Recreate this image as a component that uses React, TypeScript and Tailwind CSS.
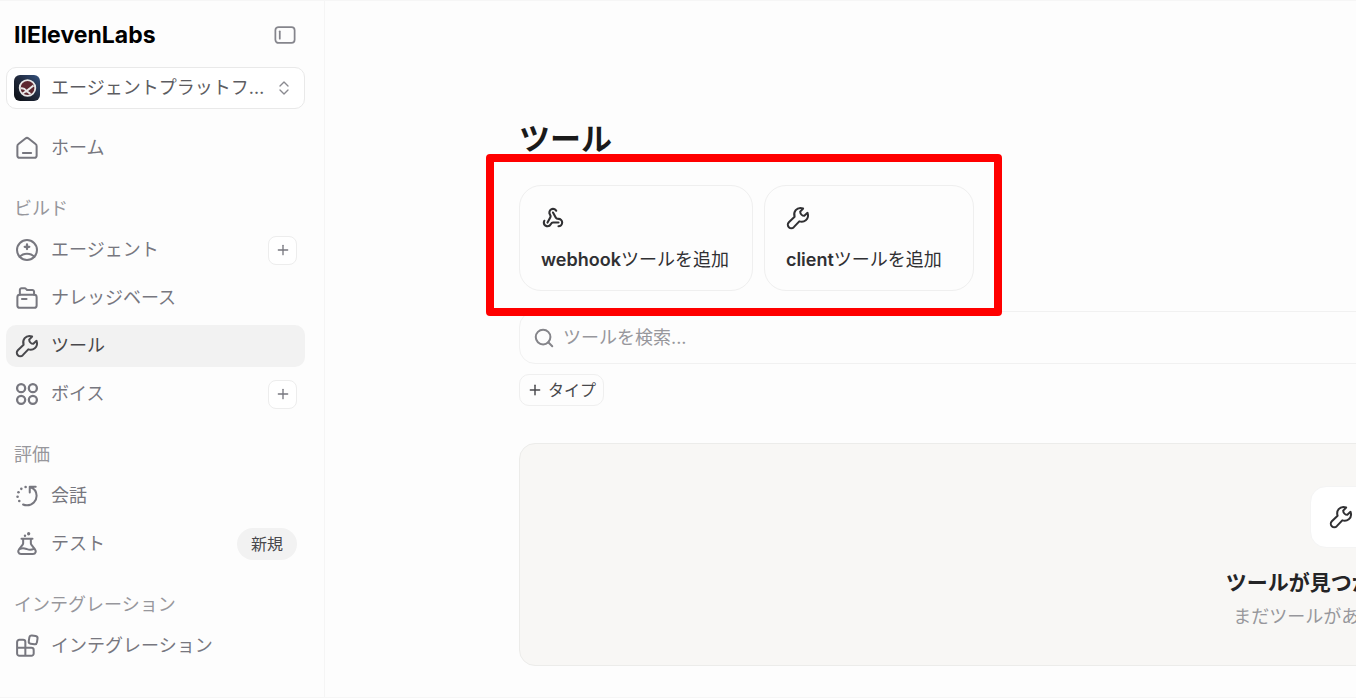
import React from 'react';
import { ChevronDown, ChevronUp, Plus, Search, Webhook } from 'lucide-react';

type IconProps = { className?: string };

const iconProps = {
  viewBox: '0 0 24 24',
  fill: 'none',
  stroke: 'currentColor',
  strokeWidth: 2.2,
  strokeLinecap: 'round' as const,
  strokeLinejoin: 'round' as const,
  'aria-hidden': true
};

const WrenchIcon: React.FC<IconProps> = ({ className }) => (
  <svg {...iconProps} className={className}>
    <path d="M17.6 1.6C14.7.6 11.4 1.2 9.5 3.5 7.8 5.5 7.5 8.2 8.3 10.6L2 16.600A3.8 3.8 0 0 0 7.4 22l6-6.300c2.400.8 5.100.5 7.100-1.200 2.300-1.900 2.900-5.200 1.900-8.100l-3.500 3.200c-2.400-.1-4.400-2.100-4.500-4.500Z" />
  </svg>
);

const WebhookIcon: React.FC<IconProps> = ({ className }) => (
  <Webhook className={className} strokeWidth={2.3} />
);

const HomeIcon: React.FC<IconProps> = ({ className }) => (
  <svg {...iconProps} className={className}>
    <path d="M1.5 10c0-1 .4-1.8 1.2-2.4l7.6-6a2.7 2.7 0 0 1 3.4 0l7.6 6c.8.6 1.2 1.4 1.2 2.4v10.5a2.2 2.2 0 0 1-2.2 2.2H3.7a2.2 2.2 0 0 1-2.2-2.2Z" />
    <path d="M7.5 17.5h9" />
  </svg>
);

const AgentIcon: React.FC<IconProps> = ({ className }) => (
  <svg {...iconProps} className={className}>
    <circle cx="12" cy="12" r="10.9" />
    <path d="M12 6v5M9.5 8.5h5" strokeWidth="2.5" />
    <path d="M4 19.5c1.8-2.2 4.6-3.5 8-3.5s6.2 1.3 8 3.5" />
  </svg>
);

const KnowledgeIcon: React.FC<IconProps> = ({ className }) => (
  <svg {...iconProps} className={className}>
    <rect x="1.5" y="8.5" width="21" height="14.2" rx="2.6" />
    <path d="M4.2 8.5V3.2A1.9 1.9 0 0 1 6.1 1.3h3.3c.6 0 1.1.2 1.5.7l1.2 1.3h5.7a1.9 1.9 0 0 1 1.9 1.9v3.3" />
    <path d="M6.5 13.2h5" />
  </svg>
);

const VoiceIcon: React.FC<IconProps> = ({ className }) => (
  <svg {...iconProps} strokeWidth={2.5} className={className}>
    <circle cx="5.6" cy="5.6" r="4.4" />
    <circle cx="18.4" cy="5.6" r="4.4" />
    <circle cx="5.6" cy="18.4" r="4.4" />
    <circle cx="18.4" cy="18.4" r="4.4" />
  </svg>
);

const ConversationIcon: React.FC<IconProps> = ({ className }) => (
  <svg {...iconProps} className={className}>
    <path d="M21.5 1.8H15v6.5M15.3 2.1c4.3 1.5 7.2 5.3 7.2 9.7 0 5.7-4.6 10.4-10.5 10.4-1.6 0-3-.3-4.3-.9" />
    <g fill="currentColor" stroke="none">
      <circle cx="10.5" cy="2.2" r="1.4" />
      <circle cx="5.8" cy="4.2" r="1.4" />
      <circle cx="2.7" cy="8" r="1.4" />
      <circle cx="1.7" cy="12.8" r="1.4" />
      <circle cx="3.6" cy="17.5" r="1.4" />
    </g>
  </svg>
);

const TestIcon: React.FC<IconProps> = ({ className }) => (
  <svg {...iconProps} className={className}>
    <path d="M6 6.3h12M7.8 6.3v4.9c0 .5-.2 1-.5 1.4l-4 5.2c-1.7 2.3-.7 5.2 2.2 5.2h13c2.9 0 3.9-2.9 2.2-5.2l-4-5.2c-.3-.4-.5-.9-.5-1.4V6.3" />
    <path d="M4.5 17.3c3-1.5 5-.6 7.5.3s4.8 1 7.5-.3" />
    <circle cx="9.8" cy="3" r="1.3" fill="currentColor" stroke="none" />
    <circle cx="13.8" cy=".8" r="1.8" fill="currentColor" stroke="none" />
  </svg>
);

const IntegrationIcon: React.FC<IconProps> = ({ className }) => (
  <svg {...iconProps} className={className}>
    <path d="M1.2 14h15.6a2.5 2.5 0 0 1 2.5 2.5v3.7a2.5 2.5 0 0 1-2.5 2.5H3.7a2.5 2.5 0 0 1-2.5-2.5V7.7a2.5 2.5 0 0 1 2.5-2.5h4a2.5 2.5 0 0 1 2.5 2.5v15" />
    <rect x="14.2" y=".8" width="9" height="9" rx="2.4" transform="rotate(9 18.7 5.3)" />
  </svg>
);

const PanelIcon: React.FC<IconProps> = ({ className }) => (
  <svg {...iconProps} strokeWidth={1.9} className={className}>
    <rect x="1.5" y="3.3" width="21" height="17.4" rx="3.5" />
    <path d="M6.3 8v8" />
  </svg>
);

const Avatar: React.FC = () => (
  <svg viewBox="0 0 26 26" className="h-[26px] w-[26px] shrink-0" aria-hidden="true">
    <defs>
      <linearGradient id="avatar" x1="1" y1="0" x2="0" y2="1">
        <stop offset="0" stopColor="#34527f" />
        <stop offset="0.5" stopColor="#20283a" />
        <stop offset="1" stopColor="#0b0d12" />
      </linearGradient>
    </defs>
    <rect width="26" height="26" rx="6" fill="url(#avatar)" />
    <circle cx="13.5" cy="13" r="7.8" fill="#5d2730" stroke="#e8e8e8" strokeWidth="1.8" />
    <path d="M6.5 13.5c2.500-.5 4.500.5 6 2.500l7-5.500M12.500 16l-4 2.500M12.500 16l4 3" fill="none" stroke="#e8e8e8" strokeWidth="2" />
  </svg>
);

interface NavItem {
  label: string;
  icon: React.FC<IconProps>;
  active?: boolean;
  addable?: boolean;
  badge?: string;
}

interface NavSection {
  title: string;
  items: NavItem[];
}

const sections: NavSection[] = [
  {
    title: 'ビルド',
    items: [
      { label: 'エージェント', icon: AgentIcon, addable: true },
      { label: 'ナレッジベース', icon: KnowledgeIcon },
      { label: 'ツール', icon: WrenchIcon, active: true },
      { label: 'ボイス', icon: VoiceIcon, addable: true }
    ]
  },
  {
    title: '評価',
    items: [
      { label: '会話', icon: ConversationIcon },
      { label: 'テスト', icon: TestIcon, badge: '新規' }
    ]
  },
  {
    title: 'インテグレーション',
    items: [{ label: 'インテグレーション', icon: IntegrationIcon }]
  }
];

const NavRow: React.FC<{ item: NavItem }> = ({ item }) => {
  const Icon = item.icon;

  return (
    <li
      className={`flex h-[42px] items-center rounded-[10px] pl-[10px] pr-2 ${
        item.active ? 'bg-[#f2f2f2] text-[#48484c]' : 'text-[#77777f]'
      }`}
    >
      <a href="#" className="flex flex-1 items-center gap-[13px]">
        <Icon className="h-[22px] w-[22px] shrink-0 overflow-visible" />
        <span>{item.label}</span>
      </a>
      {item.addable && (
        <button
          type="button"
          aria-label={`${item.label}を追加`}
          className="flex h-[29px] w-[29px] items-center justify-center rounded-lg border border-[#ededed] bg-white"
        >
          <Plus className="h-4 w-4" strokeWidth={2} />
        </button>
      )}
      {item.badge && (
        <span className="flex h-8 items-center rounded-full bg-[#f2f2f2] px-[14px] text-base text-[#48484c]">
          {item.badge}
        </span>
      )}
    </li>
  );
};

const Sidebar: React.FC = () => (
  <aside className="w-[325px] shrink-0 border-r border-[#f5f5f5] pl-[6px] pr-[19px]">
    <div className="flex h-[66px] items-center justify-between pl-2 pr-[9px] pt-[2px]">
      <span className="text-[23px] font-bold text-black">IIElevenLabs</span>
      <button type="button" aria-label="サイドバーを閉じる" className="text-[#85858c]">
        <PanelIcon className="h-[22px] w-[22px]" />
      </button>
    </div>

    <button
      type="button"
      className="flex h-[42px] w-full items-center rounded-[10px] border border-[#e9e9e9] bg-white pl-[7px] pr-3 text-[#5c5c61]"
    >
      <Avatar />
      <span className="ml-[11px] flex-1 truncate text-left">エージェントプラットフォーム</span>
      <span className="ml-2 flex flex-col text-[#8a8a90]">
        <ChevronUp className="-mb-0.5 h-[10px] w-4" strokeWidth={2} preserveAspectRatio="xMidYMid slice" />
        <ChevronDown className="h-[10px] w-4" strokeWidth={2} preserveAspectRatio="xMidYMid slice" />
      </span>
    </button>

    <nav className="mt-[18px]">
      <ul>
        <NavRow item={{ label: 'ホーム', icon: HomeIcon }} />
      </ul>
      {sections.map((section) => (
        <section key={section.title} className="mt-7">
          <h2 className="mb-2 pl-2 leading-6 text-[#97979c]">{section.title}</h2>
          <ul className="flex flex-col gap-[6px]">
            {section.items.map((item) => (
              <NavRow key={item.label} item={item} />
            ))}
          </ul>
        </section>
      ))}
    </nav>
  </aside>
);

const AddToolCard: React.FC<{ kind: string; icon: React.FC<IconProps> }> = ({ kind, icon: Icon }) => (
  <button
    type="button"
    className="flex h-[106px] min-w-[210px] flex-col items-start justify-between rounded-[22px] border border-[#efefef] pb-[18px] pl-[21px] pr-[23px] pt-[21px] text-[#303033]"
  >
    <Icon className="h-[22px] w-6 overflow-visible" />
    <span className="leading-6">
      <span className="font-semibold">{kind}</span>ツールを追加
    </span>
  </button>
);

const App: React.FC = () => (
  <div
    lang="ja"
    className="flex min-h-screen border-y border-[#f6f6f6] bg-[#fdfdfd] font-['Inter','Noto_Sans_CJK_JP',sans-serif] text-lg leading-6"
  >
    <Sidebar />

    <main className="min-w-0 flex-1 overflow-hidden pl-[194px] pt-[118px]">
      <div className="w-[1644px]">
        <h1 className="text-[31px] font-bold leading-10 text-[#1a1a1a]">ツール</h1>

        <div className="relative mt-[26px] flex w-fit gap-[11px]">
          <AddToolCard kind="webhook" icon={WebhookIcon} />
          <AddToolCard kind="client" icon={WrenchIcon} />
          <div className="pointer-events-none absolute -bottom-[25px] -left-[33px] -right-[28px] -top-[31px] rounded-[4px] border-8 border-[#ff0000]" />
        </div>

        <label className="mt-5 flex h-[53px] items-center gap-2 rounded-2xl border border-[#f1f1f1] px-[13px]">
          <Search className="h-[22px] w-[22px] text-[#85858a]" strokeWidth={2.2} />
          <input
            type="text"
            aria-label="ツールを検索"
            placeholder="ツールを検索..."
            className="h-full flex-1 bg-transparent outline-none placeholder:text-[#97979c]"
          />
        </label>

        <button
          type="button"
          className="mt-[10px] flex h-8 items-center gap-[5px] rounded-[10px] border border-[#efefef] px-[7px] text-base text-[#48484c]"
        >
          <Plus className="h-4 w-4" strokeWidth={2.2} />
          タイプ
        </button>

        <section className="mt-[37px] flex h-[223px] flex-col items-center rounded-2xl border border-[#ececea] bg-[#f8f7f5] pt-[42px]">
          <div className="flex h-[62px] w-[62px] items-center justify-center rounded-2xl border border-[#f4f4f4] bg-white text-[#303033]">
            <WrenchIcon className="h-[22px] w-[22px] overflow-visible" />
          </div>
          <h2 className="mt-[21px] text-[21px] font-bold leading-7 text-[#242426]">ツールが見つかりません</h2>
          <p className="mt-2 text-[#97979c]">まだツールがありません。</p>
        </section>
      </div>
    </main>
  </div>
);

export default App;
